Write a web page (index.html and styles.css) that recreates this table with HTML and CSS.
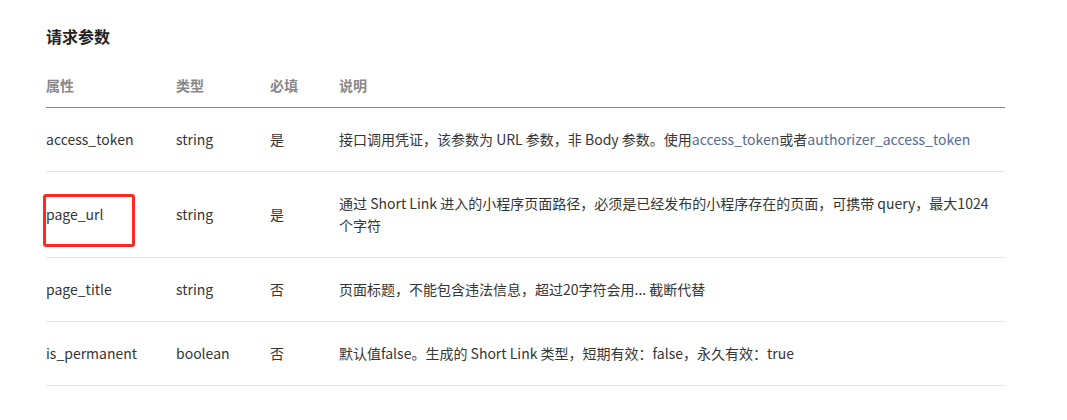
FILE: index.html
```html
<!DOCTYPE html>
<html lang="zh-CN">
<head>
<meta charset="utf-8">
<link rel="stylesheet" href="styles.css">
</head>
<body>
<div class="page">
  <h3 class="title">请求参数</h3>
  <div class="table">
    <table>
      <colgroup>
        <col class="c1"><col class="c2"><col class="c3"><col class="c4">
      </colgroup>
      <thead>
        <tr><th>属性</th><th>类型</th><th>必填</th><th>说明</th></tr>
      </thead>
      <tbody>
        <tr><td>access_token</td><td>string</td><td>是</td><td>接口调用凭证，该参数为 URL 参数，非 Body 参数。使用<span class="link">access_token</span>或者<span class="link">authorizer_access_token</span></td></tr>
        <tr><td class="marked-cell"><span class="mark"></span>page_url</td><td>string</td><td>是</td><td>通过 Short Link 进入的小程序页面路径，必须是已经发布的小程序存在的页面，可携带 query，最大1024个字符</td></tr>
        <tr><td>page_title</td><td>string</td><td>否</td><td>页面标题，不能包含违法信息，超过20字符会用... 截断代替</td></tr>
        <tr><td>is_permanent</td><td>boolean</td><td>否</td><td>默认值false。生成的 Short Link 类型，短期有效：false，永久有效：true</td></tr>
      </tbody>
    </table>
  </div>
</div>
</body>
</html>
```

FILE: styles.css
```css
html, body {
  margin: 0;
  padding: 0;
  background: #fff;
}
body {
  font-family: "Noto Sans CJK SC", "Noto Sans", sans-serif;
  color: #353535;
  font-size: 14px;
}
.page {
  padding: 24px 0 0 46px;
  width: 959px;
}
.title {
  margin: 0;
  font-size: 16px;
  line-height: 24px;
  font-weight: 700;
  color: #222;
}
.table {
  margin-top: 26px;
}
table {
  width: 959px;
  border-collapse: collapse;
  table-layout: fixed;
}
.c1 { width: 130px; }
.c2 { width: 94px; }
.c3 { width: 69px; }
.c4 { width: auto; }
th {
  text-align: left;
  font-weight: 700;
  color: #888;
  line-height: 22px;
  padding: 0 0 11px 0;
  border-bottom: 1px solid #888;
}
td {
  line-height: 22px;
  padding: 20px 10px 21px 0;
  border-bottom: 1px solid #e5e5e5;
  vertical-align: middle;
  word-break: break-all;
}
.link {
  color: #576b95;
}
.marked-cell {
  position: relative;
}
.mark {
  position: absolute;
  left: -3px;
  top: 22px;
  width: 86px;
  height: 47px;
  border: 3px solid #ff2a1f;
  border-radius: 3px;
}
```
